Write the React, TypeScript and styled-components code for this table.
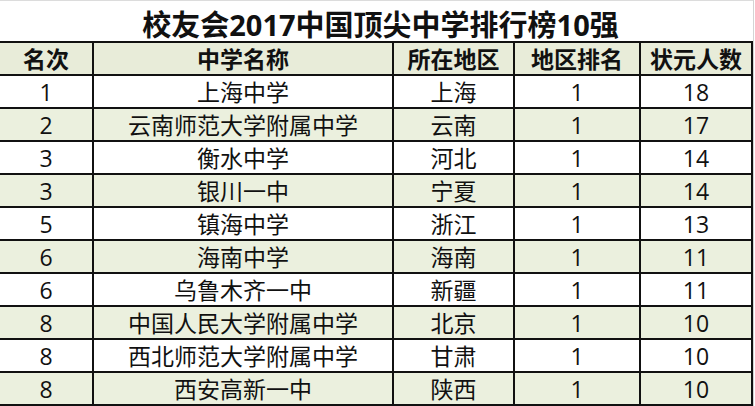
import React from "react";
import styled, { createGlobalStyle } from "styled-components";

const GlobalStyle = createGlobalStyle`
  html, body {
    margin: 0;
    padding: 0;
    background: #ffffff;
  }
  body {
    font-family: "Open Sans", "Noto Sans CJK SC", sans-serif;
    color: #111;
  }
`;

const Sheet = styled.div`
  width: 753px;
  border-right: 1px solid #d4d4d4;
`;

const Title = styled.h1`
  margin: 0;
  height: 41px;
  border-top: 1px solid #dcdcdc;
  box-sizing: border-box;
  display: flex;
  align-items: center;
  justify-content: center;
  font-size: 29px;
  font-weight: 700;
  color: #111;
  padding-top: 3px;
  padding-left: 8px;
`;

const Table = styled.div`
  border-top: 2px solid #111;
`;

const Row = styled.div<{ $tint: "head" | "stripe" | "plain" }>`
  display: grid;
  grid-template-columns: 94px 300px 121px 126px 112px;
  height: 33px;
  box-sizing: border-box;
  border-bottom: 2px solid #111;
  background: ${(p) =>
    p.$tint === "head" ? "#e8ecd9" : p.$tint === "stripe" ? "#ebf0de" : "#ffffff"};
`;

const Cell = styled.div<{ $bold?: boolean }>`
  border-right: 2px solid #111;
  display: flex;
  align-items: center;
  justify-content: center;
  font-size: 23px;
  line-height: 1;
  font-weight: ${(p) => (p.$bold ? 700 : 400)};
  white-space: nowrap;
  padding-top: 2px;
`;

const headers = ["名次", "中学名称", "所在地区", "地区排名", "状元人数"];

const rows = [
  ["1", "上海中学", "上海", "1", "18"],
  ["2", "云南师范大学附属中学", "云南", "1", "17"],
  ["3", "衡水中学", "河北", "1", "14"],
  ["3", "银川一中", "宁夏", "1", "14"],
  ["5", "镇海中学", "浙江", "1", "13"],
  ["6", "海南中学", "海南", "1", "11"],
  ["6", "乌鲁木齐一中", "新疆", "1", "11"],
  ["8", "中国人民大学附属中学", "北京", "1", "10"],
  ["8", "西北师范大学附属中学", "甘肃", "1", "10"],
  ["8", "西安高新一中", "陕西", "1", "10"],
];

const App = () => {
  return (
    <>
      <GlobalStyle />
      <Sheet>
        <Title>校友会2017中国顶尖中学排行榜10强</Title>
        <Table>
          <Row $tint="head">
            {headers.map((h) => (
              <Cell key={h} $bold>
                {h}
              </Cell>
            ))}
          </Row>
          {rows.map((r, i) => (
            <Row key={i} $tint={i % 2 === 1 ? "stripe" : "plain"}>
              {r.map((v, j) => (
                <Cell key={j}>{v}</Cell>
              ))}
            </Row>
          ))}
        </Table>
      </Sheet>
    </>
  );
};

export default App;
